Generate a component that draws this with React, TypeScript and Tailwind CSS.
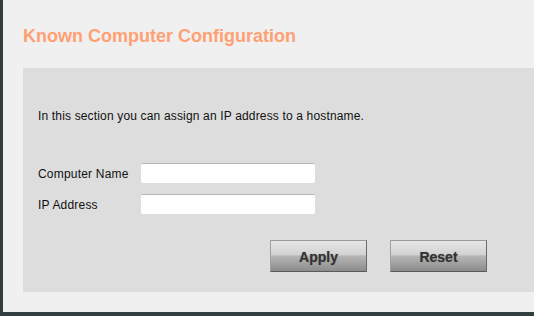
import React from "react";

function Btn({ label }: { label: string }) {
  return (
    <button
      type="button"
      className="w-[97px] h-[32px] pt-[2px] border border-t-[#9a9a9a] border-l-[#a0a0a0] border-r-[#6a6a6a] border-b-[#5a5a5a] bg-[linear-gradient(to_bottom,#e6e6e6_0%,#d2d2d2_46%,#b6b6b6_50%,#8c8c8c_100%)] text-[14px] font-bold text-[#333] [text-shadow:0_0_1px_#777] flex items-center justify-center"
    >
      {label}
    </button>
  );
}

export default function App() {
  return (
    <div className="w-[534px] h-[316px] bg-[#f0f0f0] border-l-[3px] border-b-[4px] border-[#333d3d] font-['Liberation_Sans',Arial,sans-serif] overflow-hidden">
      <div className="pl-[20px] pt-[26px]">
        <h1 className="text-[18px] leading-[21px] font-bold text-[#ffa073] m-0">
          Known Computer Configuration
        </h1>
        <div className="mt-[21px] h-[224px] bg-[#dddddd] pl-[15px] pt-[41px]">
          <p className="text-[12px] leading-[14px] tracking-[0.16px] text-[#111]">
            In this section you can assign an IP address to a hostname.
          </p>
          <div className="mt-[40px] flex flex-col gap-[11px]">
            <div className="flex items-center">
              <span className="w-[103px] text-[12px] tracking-[0.2px] text-[#111] pt-[1px]">Computer Name</span>
              <input className="w-[174px] h-[20px] bg-white rounded-[2px] border-t border-t-[#b5b5b5] outline-none" />
            </div>
            <div className="flex items-center">
              <span className="w-[103px] text-[12px] tracking-[0.2px] text-[#111] pt-[1px]">IP Address</span>
              <input className="w-[174px] h-[20px] bg-white rounded-[2px] border-t border-t-[#b5b5b5] outline-none" />
            </div>
          </div>
          <div className="mt-[26px] flex gap-[23px] pl-[232px]">
            <Btn label="Apply" />
            <Btn label="Reset" />
          </div>
        </div>
      </div>
    </div>
  );
}
